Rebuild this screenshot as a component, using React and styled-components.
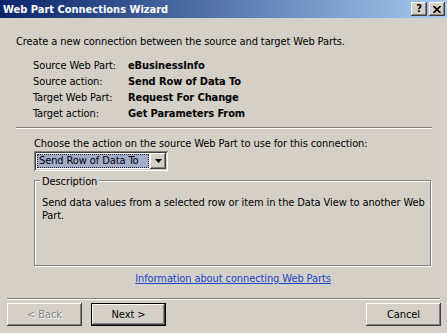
import React from 'react';
import styled, { createGlobalStyle, css } from 'styled-components';

const GlobalStyle = createGlobalStyle`
  html, body {
    margin: 0;
    padding: 0;
    background: #d4d0c8;
  }
  body {
    font-family: "DejaVu Sans Condensed", "Liberation Sans", sans-serif;
    font-size: 11px;
    letter-spacing: -0.1px;
    color: #000;
  }
`;

const raised = css`
  background: #d4d0c8;
  box-shadow: inset -1px -1px #404040, inset 1px 1px #fff,
    inset -2px -2px #808080, inset 2px 2px #d4d0c8;
`;

const Window = styled.div`
  width: 447px;
  height: 333px;
  display: flex;
  flex-direction: column;
  background: #d4d0c8;
  overflow: hidden;
`;

const TitleBar = styled.div`
  height: 18px;
  display: flex;
  align-items: center;
  padding: 0 2px 0 3px;
  background: linear-gradient(to right, #0a246a, #a6caf0);
`;

const Title = styled.span`
  color: #fff;
  font-weight: bold;
  font-size: 11px;
  letter-spacing: 0;
  line-height: 13px;
`;

const CaptionButtons = styled.div`
  margin-left: auto;
  display: flex;
  gap: 2px;
`;

const CaptionButton = styled.div`
  ${raised};
  width: 16px;
  height: 14px;
  display: flex;
  align-items: center;
  justify-content: center;
  font-family: "DejaVu Sans", sans-serif;
  font-weight: bold;
  font-size: 10px;
  line-height: 10px;
`;

const Intro = styled.div`
  margin: 17px 0 0 16px;
  line-height: 13px;
`;

const InfoGrid = styled.div`
  margin: 9px 0 0 33px;
  display: grid;
  grid-template-columns: 95px auto;
  grid-auto-rows: 16px;
  align-items: center;
`;

const InfoValue = styled.span`
  font-weight: bold;
`;

const Etched = styled.div`
  height: 1px;
  background: #808080;
  border-bottom: 1px solid #fff;
  margin: ${(p) => p.$margin};
`;

const Section = styled.div`
  padding: 0 15px 0 34px;
  display: flex;
  flex-direction: column;
  align-items: flex-start;
`;

const Label = styled.div`
  margin-top: 8px;
  line-height: 13px;
`;

const Combo = styled.div`
  margin-top: 1px;
  width: 134px;
  height: 20px;
  box-sizing: border-box;
  padding: 2px;
  display: flex;
  background: #fff;
  box-shadow: inset 1px 1px #808080, inset -1px -1px #fff,
    inset 2px 2px #404040, inset -2px -2px #d4d0c8;
`;

const ComboField = styled.div`
  flex: 1;
  padding: 1px;
  display: flex;
`;

const Selected = styled.div`
  flex: 1;
  background: #a3adc9;
  border: 1px dotted #202020;
  line-height: 12px;
  padding-left: 1px;
`;

const DropButton = styled.div`
  ${raised};
  width: 16px;
  display: flex;
  align-items: center;
  justify-content: center;
`;

const GroupBox = styled.div`
  position: relative;
  margin-top: 9px;
  width: 397px;
  height: 86px;
  box-sizing: border-box;
  border: 1px solid #808080;
  box-shadow: 1px 1px 0 #fff, inset 1px 1px 0 #fff;
  padding: 15px 4px 0 7px;
  line-height: 13px;
`;

const Legend = styled.span`
  position: absolute;
  top: -6px;
  left: 5px;
  padding: 0 2px;
  background: #d4d0c8;
  line-height: 13px;
`;

const Link = styled.a`
  align-self: stretch;
  margin-top: 6px;
  text-align: center;
  color: #1a44c8;
  text-decoration: underline;
  line-height: 13px;
  cursor: pointer;
`;

const Footer = styled.div`
  display: flex;
  gap: 9px;
  padding: 0 6px 0 7px;
  margin-top: 3px;
`;

const Button = styled.div`
  ${raised};
  width: 75px;
  height: 23px;
  box-sizing: border-box;
  display: flex;
  align-items: center;
  justify-content: center;
  line-height: 13px;
  ${(p) =>
    p.$default &&
    css`
      border: 1px solid #000;
    `}
  ${(p) =>
    p.$disabled &&
    css`
      color: #808080;
      text-shadow: 1px 1px 0 #fff;
    `}
  ${(p) =>
    p.$right &&
    css`
      margin-left: auto;
    `}
`;

const info = [
  ['Source Web Part:', 'eBusinessInfo'],
  ['Source action:', 'Send Row of Data To'],
  ['Target Web Part:', 'Request For Change'],
  ['Target action:', 'Get Parameters From'],
];

export default function App() {
  return (
    <>
      <GlobalStyle />
      <Window>
        <TitleBar>
          <Title>Web Part Connections Wizard</Title>
          <CaptionButtons>
            <CaptionButton>?</CaptionButton>
            <CaptionButton>
              <svg width="8" height="7" viewBox="0 0 8 7">
                <path d="M0.5 0 L7.5 7 M7.5 0 L0.5 7" stroke="#000" strokeWidth="1.6" />
              </svg>
            </CaptionButton>
          </CaptionButtons>
        </TitleBar>

        <Intro>Create a new connection between the source and target Web Parts.</Intro>

        <InfoGrid>
          {info.map(([label, value]) => (
            <React.Fragment key={label}>
              <span>{label}</span>
              <InfoValue>{value}</InfoValue>
            </React.Fragment>
          ))}
        </InfoGrid>

        <Etched $margin="6px 15px 0 16px" />

        <Section>
          <Label>Choose the action on the source Web Part to use for this connection:</Label>
          <Combo>
            <ComboField>
              <Selected>Send Row of Data To</Selected>
            </ComboField>
            <DropButton>
              <svg width="7" height="4" viewBox="0 0 7 4">
                <path d="M0 0 H7 L3.5 4 Z" fill="#000" />
              </svg>
            </DropButton>
          </Combo>
          <GroupBox>
            <Legend>Description</Legend>
            Send data values from a selected row or item in the Data View to another Web Part.
          </GroupBox>
          <Link>Information about connecting Web Parts</Link>
        </Section>

        <Etched $margin="13px 7px 0 7px" />

        <Footer>
          <Button $disabled>&lt; Back</Button>
          <Button $default>Next &gt;</Button>
          <Button $right>Cancel</Button>
        </Footer>
      </Window>
    </>
  );
}
